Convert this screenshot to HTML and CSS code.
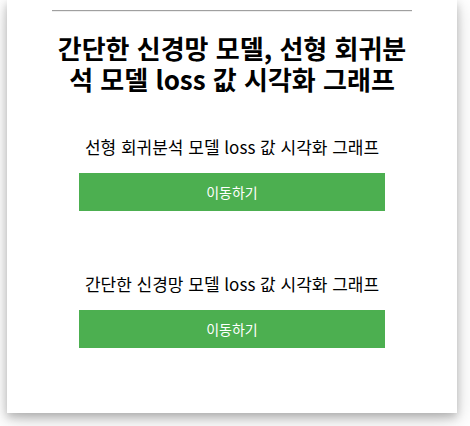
FILE: index.html
```html
<!DOCTYPE html>
<html lang="ko">
<head>
<meta charset="utf-8">
<title>loss 시각화</title>
<link rel="stylesheet" href="styles.css">
</head>
<body>
<div class="card">
  <hr class="rule">
  <h1 class="title">간단한 신경망 모델, 선형 회귀분석 모델 loss 값 시각화 그래프</h1>
  <div class="item">
    <p class="label">선형 회귀분석 모델 loss 값 시각화 그래프</p>
    <a class="btn" href="#">이동하기</a>
  </div>
  <div class="item">
    <p class="label">간단한 신경망 모델 loss 값 시각화 그래프</p>
    <a class="btn" href="#">이동하기</a>
  </div>
</div>
</body>
</html>
```
FILE: styles.css
```css
html, body {
  margin: 0;
  padding: 0;
  background: #ffffff;
}
body {
  font-family: "Noto Sans CJK KR", "Noto Sans", sans-serif;
  color: #000;
  padding-bottom: 13px;
}
.card {
  width: 450px;
  height: 413px;
  margin-left: 7px;
  box-sizing: border-box;
  background: #fff;
  box-shadow: 0 4px 8px 0 rgba(0, 0, 0, 0.2), 0 6px 20px 0 rgba(0, 0, 0, 0.19);
  padding: 10px 45px 0;
  display: flex;
  flex-direction: column;
  align-items: center;
}
.rule {
  width: 360px;
  margin: 0;
  border: 0;
  border-top: 1px solid #a0a0a0;
  border-bottom: 1px solid #eeeeee;
}
.title {
  width: 360px;
  margin: 20px 0 0;
  font-size: 26px;
  line-height: 31px;
  font-weight: bold;
  text-align: center;
  word-break: break-all;
}
.item {
  display: flex;
  flex-direction: column;
  align-items: center;
  margin-top: 41px;
}
.item + .item {
  margin-top: 61px;
}
.label {
  margin: 0;
  font-size: 17px;
  line-height: 24px;
}
.btn {
  display: flex;
  align-items: center;
  justify-content: center;
  width: 306px;
  height: 38px;
  margin-top: 14px;
  background: #4caf50;
  color: #fff;
  font-size: 14px;
  text-decoration: none;
}
```
